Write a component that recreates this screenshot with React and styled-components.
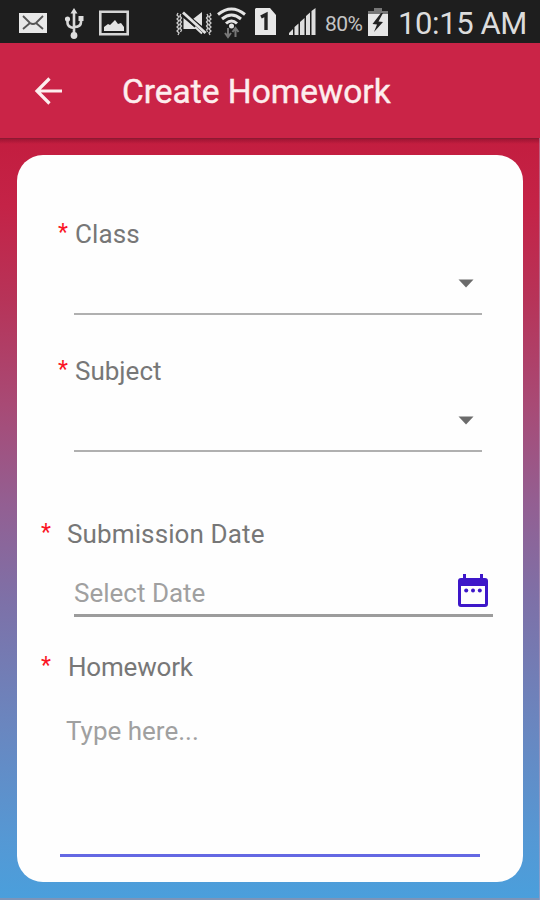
import React from "react";
import styled, { createGlobalStyle } from "styled-components";

const GlobalStyle = createGlobalStyle`
  * { box-sizing: border-box; }
  html, body { margin: 0; padding: 0; }
  body { font-family: Roboto, "Liberation Sans", sans-serif; overflow: hidden; }
`;

const Screen = styled.div`
  width: 540px;
  height: 900px;
  display: flex;
  flex-direction: column;
  background: #1e1e1e;
`;

const StatusBar = styled.div`
  height: 43px;
  flex: none;
  display: flex;
  align-items: flex-start;
  background: #1e1e1e;
  color: #dedede;
`;

const StatusIcon = styled.svg`
  flex: none;
  display: block;
  height: 43px;
  width: ${(p) => p.$w}px;
  margin-left: ${(p) => p.$gap || 0}px;
`;

const StatusText = styled.span`
  flex: none;
  width: ${(p) => p.$w}px;
  margin-left: ${(p) => p.$gap}px;
  font-size: ${(p) => p.$size}px;
  letter-spacing: ${(p) => p.$track || 0}px;
  line-height: ${(p) => p.$line || 46}px;
  white-space: nowrap;
  color: ${(p) => p.$color || "#dcdcdc"};
`;

const AppBar = styled.header`
  height: 95px;
  flex: none;
  display: flex;
  align-items: center;
  padding-left: 34px;
  background: #ca2447;
`;

const BackButton = styled.button`
  display: flex;
  width: 28px;
  height: 28px;
  padding: 0;
  border: 0;
  background: none;
`;

const Title = styled.h1`
  margin: 3px 0 0 60px;
  font-size: 33.5px;
  line-height: 40px;
  font-weight: 400;
  letter-spacing: ${(p) => p.$track}px;
  -webkit-text-stroke: 0.4px #fdeeee;
  color: #fdeeee;
  white-space: nowrap;
`;

const Backdrop = styled.main`
  flex: 1;
  padding: 17px 16px 16px 17px;
  border-right: 1px solid rgba(190, 160, 190, 0.5);
  box-shadow: inset 0 1px 0 #8c1a33, inset 0 -2px 0 #7d94b8;
  background: linear-gradient(rgba(110, 10, 35, 0.5), rgba(110, 10, 35, 0) 6px),
    linear-gradient(
      #c31d3f 0%,
      #c42347 9%,
      #b73358 21%,
      #a84a75 35%,
      #935f92 48%,
      #7d71a8 61%,
      #6a86bf 77%,
      #5598d4 92%,
      #4a9fdc 100%
    );
`;

const Card = styled.form`
  height: 727px;
  border-radius: 26px;
  background: #fefefe;
  padding: 60px 31px 0 23px;
`;

const Field = styled.section`
  height: ${(p) => p.$h}px;
  display: flex;
  flex-direction: column;
`;

const LabelRow = styled.div`
  height: 36px;
  display: flex;
  padding-left: ${(p) => p.$indent}px;
`;

const Required = styled.span`
  width: ${(p) => p.$w}px;
  font-size: 23px;
  line-height: 35px;
  color: #fb1526;
`;

const Label = styled.label`
  font-size: 26px;
  line-height: 38px;
  letter-spacing: ${(p) => p.$track || 0}px;
  color: #777;
  white-space: nowrap;
`;

const SelectBox = styled.div`
  height: 64px;
  width: 408px;
  margin-left: 34px;
  padding: 28px 8px 0 0;
  border-bottom: 2px solid #b0b0b0;
  display: flex;
  justify-content: flex-end;
`;

const DateBox = styled.div`
  width: 419px;
  height: 49px;
  margin: 17px 0 0 34px;
  padding: 5px 4px 0 0;
  border-bottom: 3px solid #9c9c9c;
  display: flex;
  justify-content: space-between;
`;

const Placeholder = styled.span`
  font-size: 26px;
  line-height: ${(p) => p.$line || 40}px;
  letter-spacing: ${(p) => p.$track || 0}px;
  color: #a0a0a0;
  white-space: nowrap;
`;

const TextBox = styled.div`
  width: 420px;
  height: 147px;
  margin: 26px 0 0 20px;
  padding: 0 0 0 6px;
  border-bottom: 3px solid #6468e3;
`;

const Caret = () => (
  <svg width="16" height="9" viewBox="0 0 16 9">
    <path d="M.5.5h15L8 8.5z" fill="#6b6b6b" />
  </svg>
);

const CalendarIcon = () => (
  <svg width="32" height="36" viewBox="0 0 32 36">
    <path d="M6 1h3v4h14V1h3v4h2a3 3 0 0 1 3 3v23a3 3 0 0 1-3 3H4a3 3 0 0 1-3-3V8a3 3 0 0 1 3-3h2zM4 13v18h24V13z" fill="#3d17c9" fillRule="evenodd" />
    <circle cx="9.200" cy="17.600" r="2" fill="#3d17c9" />
    <circle cx="16" cy="17.600" r="2" fill="#3d17c9" />
    <circle cx="22.800" cy="17.600" r="2" fill="#3d17c9" />
  </svg>
);

const SelectField = ({ label, height, track }) => (
  <Field $h={height}>
    <LabelRow $indent={18}>
      <Required $w={17}>*</Required>
      <Label $track={track}>{label}</Label>
    </LabelRow>
    <SelectBox>
      <Caret />
    </SelectBox>
  </Field>
);

const StatusIcons = () => (
  <>
    <StatusIcon $w={28} $gap={19} viewBox="19 0 28 43">
      <path d="M19 13h28v20H19z" fill="#e8e8e8" />
      <path d="M23 16l7 7q3 2 6 0l7-7M23 29l7-6M43 29l-7-6" fill="none" stroke="#555" strokeWidth="1.8" />
    </StatusIcon>
    <StatusIcon $w={20} $gap={18} viewBox="65 0 20 43">
      <path d="M74 12v23M67.500 18v5q0 4 6.500 5M81 18v4q0 5-7 5" fill="none" stroke="#d8d8d8" strokeWidth="2.600" />
      <circle cx="67.500" cy="19" r="2.600" fill="#dedede" />
      <circle cx="74" cy="35.500" r="3.400" fill="#dedede" />
      <path d="M78.500 16h5v5h-5zM74 8l3.500 5.500h-7z" fill="#dedede" />
    </StatusIcon>
    <StatusIcon $w={30} $gap={14} viewBox="99 0 30 43">
      <path d="M100.300 11.800h27.400v22.400h-27.400z" fill="none" stroke="#d5d5d5" strokeWidth="2.600" />
      <path d="M104 31v-4l4-3 2 1 5-5 3 4 3-1 3 4v4z" fill="#e4e4e4" />
    </StatusIcon>
    <StatusIcon $w={36} $gap={47} viewBox="176 0 36 43">
      <path d="M178 13l-1 2 2 2-2 2 2 2-2 2 2 2-2 2 2 2-2 2 2 2-1 2M181 14l-1 2 1.500 2-1.500 2 1.500 2-1.500 2 1.500 2-1.500 2 1.500 2-1 2M210 13l1 2-2 2 2 2-2 2 2 2-2 2 2 2-2 2 2 2-2 2 1 2M207 14l1 2-1.500 2 1.500 2-1.500 2 1.500 2-1.500 2 1.500 2-1.500 2 1 2" fill="none" stroke="#ccc" strokeWidth="1.300" />
      <path d="M193 19l9-7v14zM183.500 18l13 11h-13z" fill="#e2e2e2" />
      <path d="M183 13l22 20" stroke="#1e1e1e" strokeWidth="5.500" />
      <path d="M183 12.500l22.500 20.500" stroke="#e2e2e2" strokeWidth="2.800" />
      <path d="M195 27l7 6.500" stroke="#e2e2e2" strokeWidth="2" />
    </StatusIcon>
    <StatusIcon $w={30} $gap={5} viewBox="217 0 30 43">
      <path d="M218 14.500q13.500-11 27 0M222 19q9.500-8 19 0M226 23.500q5.500-5 11 0" fill="none" stroke="#e4e4e4" strokeWidth="3" />
      <circle cx="231.500" cy="26" r="2.500" fill="#e4e4e4" />
      <path d="M228 28v8M225 33l3 4 3-4M235.500 37v-7M232.500 32l3-4 3 4" fill="none" stroke="#777" strokeWidth="2" />
    </StatusIcon>
    <StatusIcon $w={23} $gap={7} viewBox="254 0 23 43">
      <path d="M256 8h14l6 7v20h-21V9z" fill="#e8e8e8" />
      <path d="M261 17l5-2.500V30" fill="none" stroke="#252525" strokeWidth="3.400" />
    </StatusIcon>
    <StatusIcon $w={29} $gap={11} viewBox="288 0 29 43">
      <path d="M289 35v-2l4-4v6zM294.500 35v-8l4-3.500V35zM300 35V22l4.500-4v17zM306 35V16l4-3.500V35zM311.500 35V11l4-3v27z" fill="#dedede" />
    </StatusIcon>
  </>
);

const BatteryIcon = () => (
  <StatusIcon $w={20} $gap={5} viewBox="368 0 20 43">
    <path d="M368 11h6V8h8v3h6v4h-20z" fill="#777" />
    <path d="M368 14h20v22h-20z" fill="#e6e6e6" />
    <path d="M381 13l-8.500 11 4.500.5-3 7.500 9-10-4.500-.5 4.500-8.500z" fill="#222" />
  </StatusIcon>
);

export default function App() {
  return (
    <>
      <GlobalStyle />
      <Screen>
        <StatusBar>
          <StatusIcons />
          <StatusText $w={38} $gap={8} $size={21} $track={-0.5} $line={48} $color="#c4c4c4">80%</StatusText>
          <BatteryIcon />
          <StatusText $w={130} $gap={10} $size={31} $track={-0.4} $line={47}>10:15 AM</StatusText>
        </StatusBar>
        <AppBar>
          <BackButton type="button" aria-label="Back">
            <svg width="28" height="28" viewBox="0 0 28 28" fill="none" stroke="#fdeeee" strokeWidth="3.200">
              <path d="M15.500 1.500L3 14l12.500 12.500M2.500 14H28" />
            </svg>
          </BackButton>
          <Title $track={0}>Create Homework</Title>
        </AppBar>
        <Backdrop>
          <Card>
            <SelectField label="Class" height={137} track={0.1} />
            <SelectField label="Subject" height={163} track={0} />
            <Field $h={133}>
              <LabelRow $indent={1}>
                <Required $w={26}>*</Required>
                <Label $track={0.12}>Submission Date</Label>
              </LabelRow>
              <DateBox>
                <Placeholder>Select Date</Placeholder>
                <CalendarIcon />
              </DateBox>
            </Field>
            <Field $h={209}>
              <LabelRow $indent={1}>
                <Required $w={27}>*</Required>
                <Label $track={-0.2}>Homework</Label>
              </LabelRow>
              <TextBox>
                <Placeholder $line={42}>Type here...</Placeholder>
              </TextBox>
            </Field>
          </Card>
        </Backdrop>
      </Screen>
    </>
  );
}
